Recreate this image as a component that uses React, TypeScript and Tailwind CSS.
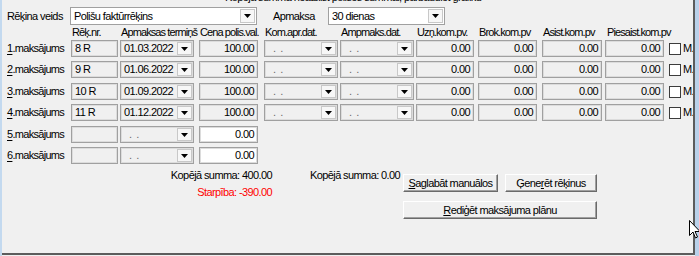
import React from "react"

type Row = {
  n: number
  nr: string
  date: string
  cena: string
  full: boolean
}

const rows: Row[] = [
  { n: 1, nr: "8 R", date: "01.03.2022", cena: "100.00", full: true },
  { n: 2, nr: "9 R", date: "01.06.2022", cena: "100.00", full: true },
  { n: 3, nr: "10 R", date: "01.09.2022", cena: "100.00", full: true },
  { n: 4, nr: "11 R", date: "01.12.2022", cena: "100.00", full: true },
  { n: 5, nr: "", date: "", cena: "0.00", full: false },
  { n: 6, nr: "", date: "", cena: "0.00", full: false },
]

// atstarpe starp rindām (px)
const rowGap = ["mt-[1px]", "mt-[4px]", "mt-[5px]", "mt-[4px]", "mt-[5px]", "mt-[4px]"]

function Arrow() {
  return (
    <svg width="7" height="4" viewBox="0 0 7 4">
      <path d="M0 0h7L3.5 4z" fill="#000" />
    </svg>
  )
}

function Field({ className = "", white, right, children }: { className?: string; white?: boolean; right?: boolean; children?: React.ReactNode }) {
  return (
    <div
      className={`h-[17px] shrink-0 border border-[#a0a0a0] shadow-[inset_0_0_0_1px_#dcdcdc] flex items-center px-[3px] whitespace-nowrap overflow-hidden ${
        white ? "bg-white" : "bg-[#f0f0f0]"
      } ${right ? "justify-end" : ""} ${className}`}
    >
      {children}
    </div>
  )
}

function Combo({ className = "", white, h = "h-[17px]", children }: { className?: string; white?: boolean; h?: string; children?: React.ReactNode }) {
  return (
    <div
      className={`${h} shrink-0 border border-[#a0a0a0] flex items-stretch whitespace-nowrap ${white ? "bg-white" : "bg-[#f0f0f0] shadow-[inset_0_0_0_1px_#dcdcdc]"} ${className}`}
    >
      <div className="flex-1 flex items-center pl-[2px] overflow-hidden">{children}</div>
      <div className="w-[15px] my-[1px] mr-[1px] border border-[#c8c8c8] bg-[#f7f7f7] flex items-center justify-center">
        <Arrow />
      </div>
    </div>
  )
}

function Dots() {
  return <span className="pl-[6px] whitespace-pre text-[#6b6b6b]">.  .</span>
}

function Btn({ className = "", children }: { className?: string; children: React.ReactNode }) {
  return (
    <div
      className={`h-[18px] flex items-center justify-center border border-t-white border-l-white border-b-[#6a6a6a] border-r-[#6a6a6a] shadow-[inset_-1px_-1px_0_#a0a0a0] bg-[#f0f0f0] ${className}`}
    >
      {children}
    </div>
  )
}

export default function App() {
  return (
    <div className="relative w-[699px] h-[256px] overflow-hidden flex bg-[#f0f0f0] font-['Liberation_Sans',Arial,sans-serif] text-[11px] leading-[13px] tracking-[-0.6px] text-black">
      <div className="w-[2px] h-full bg-[#c3d9ef]" />

      <div className="w-[693px] h-[255px] border-r-2 border-b-2 border-[#5c5c5c] overflow-hidden pl-[5px]">
        {/* nogriezts teksts augšā */}
        <div className="h-[4px] overflow-hidden">
          <div className="ml-[218px] -mt-[9px] whitespace-nowrap">Kopējā summa neatbilst polises summai, pārbaudiet grafiku</div>
        </div>

        {/* Rēķina veids / Apmaksa */}
        <div className="mt-[3px] flex items-center">
          <div className="w-[63px] shrink-0">Rēķina veids</div>
          <Combo white h="h-[18px]" className="w-[187px]">
            <span className="pl-[1px]">Polišu faktūrrēķins</span>
          </Combo>
          <div className="ml-[16px] w-[55px] shrink-0">Apmaksa</div>
          <Combo white h="h-[18px]" className="w-[117px]">
            <span className="pl-[1px]">30 dienas</span>
          </Combo>
        </div>

        {/* kolonnu virsraksti */}
        <div className="mt-[1px] flex whitespace-nowrap tracking-[-0.9px]">
          <div className="w-[64px] shrink-0" />
          <div className="w-[49px] shrink-0 pl-[1px]">Rēķ.nr.</div>
          <div className="w-[79px] shrink-0 pl-[1px]">Apmaksas termiņš</div>
          <div className="w-[65px] shrink-0 pl-[1px]">Cena polis.val.</div>
          <div className="w-[76px] shrink-0 pl-[1px]">Kom.apr.dat.</div>
          <div className="w-[76px] shrink-0 pl-[1px]">Ampmaks.dat.</div>
          <div className="w-[62px] shrink-0 pl-[1px]">Uzņ.kom.pv.</div>
          <div className="w-[64px] shrink-0 pl-[1px]">Brok.kom.pv</div>
          <div className="w-[63px] shrink-0 pl-[1px]">Asist.kom.pv</div>
          <div className="shrink-0 pl-[2px]">Piesaist.kom.pv</div>
        </div>

        {/* maksājumu rindas */}
        {rows.map((r, i) => (
          <div key={r.n} className={`${rowGap[i]} flex items-center`}>
            <div className="w-[64px] shrink-0 tracking-[-0.7px]">
              <span className="underline underline-offset-2">{r.n}</span>.maksājums
            </div>
            <Field className="w-[47px]">{r.nr}</Field>
            <Combo className="ml-[2px] w-[74px]">{r.full ? <span className="pl-[1px]">{r.date}</span> : <Dots />}</Combo>
            <Field white={!r.full} right className="ml-[5px] w-[59px]">
              {r.cena}
            </Field>
            {r.full && (
              <>
                <Combo className="ml-[6px] w-[74px]">
                  <Dots />
                </Combo>
                <Combo className="ml-[2px] w-[74px]">
                  <Dots />
                </Combo>
                <Field right className="ml-[2px] w-[58px]">0.00</Field>
                <Field right className="ml-[4px] w-[59px]">0.00</Field>
                <Field right className="ml-[5px] w-[60px]">0.00</Field>
                <Field right className="ml-[3px] w-[59px]">0.00</Field>
                <div className="ml-[5px] w-[12px] h-[12px] shrink-0 border border-[#3c3c3c] bg-white" />
                <div className="ml-[2px] whitespace-nowrap">M.</div>
              </>
            )}
          </div>
        ))}

        {/* summas un pogas */}
        <div className="mt-[3px] flex items-start">
          <div className="ml-[153px] w-[112px] shrink-0 text-right flex flex-col">
            <div className="mt-[2px] whitespace-nowrap">Kopējā summa: 400.00</div>
            <div className="mt-[4px] whitespace-nowrap text-[#ff0000]">Starpība: -390.00</div>
          </div>
          <div className="ml-[38px] mt-[2px] w-[93px] shrink-0 whitespace-nowrap">Kopējā summa: 0.00</div>
          <div className="mt-[7px] w-[194px] shrink-0 flex flex-col">
            <div className="flex gap-[7px]">
              <Btn className="w-[95px]">
                <span>
                  <span className="underline underline-offset-1">S</span>aglabāt manuālos
                </span>
              </Btn>
              <Btn className="w-[92px]">
                <span>
                  Ģene<span className="underline underline-offset-1">r</span>ēt rēķinus
                </span>
              </Btn>
            </div>
            <Btn className="mt-[9px] w-[194px]">
              <span>
                <span className="underline underline-offset-1">R</span>ediģēt maksājuma plānu
              </span>
            </Btn>
          </div>
        </div>
      </div>

      <div className="flex-1 h-full bg-[#b9d1ea]" />

      {/* peles kursors */}
      <svg className="absolute left-[689px] top-[220px]" width="12" height="19" viewBox="0 0 12 19">
        <path d="M0.5 0.5v15l3.5-3.5 2.5 6 2-1-2.5-5.5h5z" fill="#fff" stroke="#000" strokeWidth="1" />
      </svg>
    </div>
  )
}
